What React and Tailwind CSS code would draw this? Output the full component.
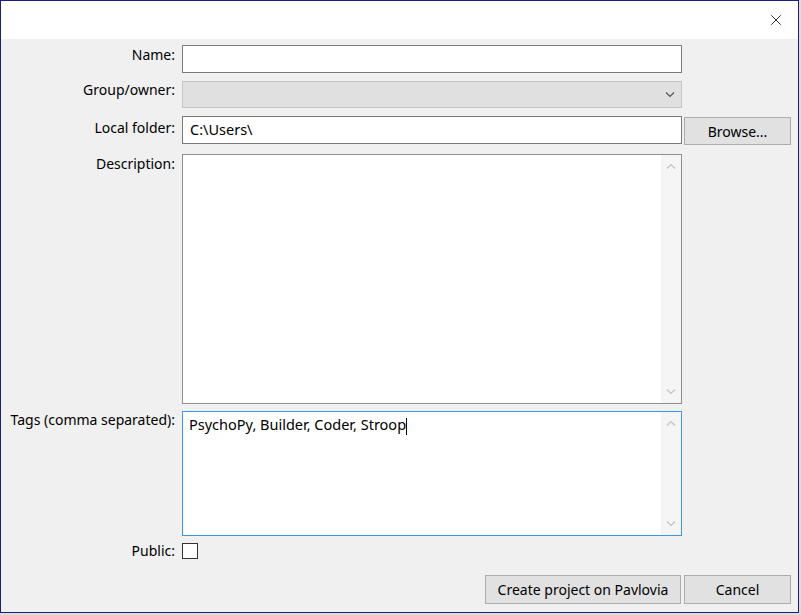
import { X } from 'lucide-react'

function Chevron({ up, className }) {
  return (
    <svg width="10" height="6" viewBox="0 0 10 6" className={className}>
      <path d={up ? 'M1 5.5 L5 1.5 L9 5.5' : 'M1 0.5 L5 4.5 L9 0.5'} fill="none" stroke="currentColor" strokeWidth="1.2" />
    </svg>
  )
}

function Label({ children, className = '' }) {
  return (
    <div className={`w-[174px] shrink-0 text-right leading-[18px] ${className}`}>{children}</div>
  )
}

function TextArea({ height, focused, children }) {
  return (
    <div
      className={`ml-[7px] w-[500px] flex bg-white border ${focused ? 'border-[#3f96e4]' : 'border-[#8f8f8f]'}`}
      style={{ height }}
    >
      <div className="flex-1 px-[6px] pt-[2px] leading-[20px] text-[14.5px]">{children}</div>
      <div className="w-[20px] bg-[#f5f5f5] flex flex-col items-center justify-between py-[8px] text-[#c2c2c2]">
        <Chevron up />
        <Chevron />
      </div>
    </div>
  )
}

export default function App() {
  return (
    <div className="w-[801px] h-[615px] bg-[#dcdcdc] overflow-hidden" style={{ fontFamily: '"Noto Sans", sans-serif' }}>
      <div className="w-[799px] h-[613px] border border-[#1c1f78] bg-[#f0f0f0] flex flex-col text-[14px] text-black">
        {/* Title bar */}
        <div className="h-[38px] bg-white flex items-center justify-end pr-[13px]">
          <X className="w-[18px] h-[18px] text-black" strokeWidth={1.1} />
        </div>

        <div className="flex flex-col pt-[6px]">
          {/* Name */}
          <div className="flex">
            <Label className="pt-[1px]">Name:</Label>
            <div className="ml-[7px] w-[500px] h-[28px] bg-white border border-[#7a7a7a]" />
          </div>

          {/* Group/owner */}
          <div className="flex mt-[8px]">
            <Label className="pt-0">Group/owner:</Label>
            <div className="ml-[7px] w-[500px] h-[27px] bg-[#e0e0e0] border border-[#c4c4c4] flex items-center justify-end pr-[6px] text-[#555]">
              <Chevron />
            </div>
          </div>

          {/* Local folder */}
          <div className="flex mt-[8px]">
            <Label className="pt-[3px]">Local folder:</Label>
            <div className="ml-[7px] w-[500px] h-[28px] bg-white border border-[#7a7a7a] flex items-center px-[7px] text-[14.5px]">
              C:\Users\
            </div>
            <button className="ml-[2px] mt-[1px] w-[107px] h-[28px] bg-[#e1e1e1] border border-[#adadad]">
              Browse...
            </button>
          </div>

          {/* Description */}
          <div className="flex mt-[9px]">
            <Label className="pt-[1px]">Description:</Label>
            <TextArea height={250} />
          </div>

          {/* Tags */}
          <div className="flex mt-[7px]">
            <Label className="pt-0">Tags (comma separated):</Label>
            <TextArea height={125} focused>
              PsychoPy, Builder, Coder, Stroop<span className="inline-block w-px h-[17px] bg-black align-middle" />
            </TextArea>
          </div>

          {/* Public */}
          <div className="flex mt-[6px] items-center">
            <Label>Public:</Label>
            <div className="ml-[7px] w-[16px] h-[16px] bg-white border border-[#333]" />
          </div>

          {/* Buttons */}
          <div className="flex justify-end mt-[15px] pr-[7px] gap-[3px]">
            <button className="w-[196px] h-[29px] bg-[#e1e1e1] border border-[#adadad]">
              Create project on Pavlovia
            </button>
            <button className="w-[107px] h-[29px] bg-[#e1e1e1] border border-[#adadad]">
              Cancel
            </button>
          </div>
        </div>
      </div>
    </div>
  )
}
